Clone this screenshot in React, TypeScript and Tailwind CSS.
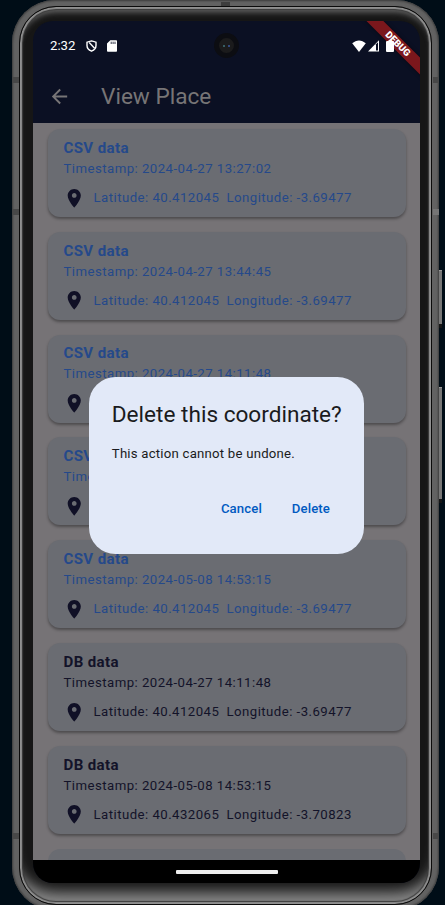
import React from "react";

type Place = {
  title: string;
  timestamp: string;
  latitude: string;
  longitude: string;
  csv: boolean;
};

const places: Place[] = [
  { title: "CSV data", timestamp: "2024-04-27 13:27:02", latitude: "40.412045", longitude: "-3.69477", csv: true },
  { title: "CSV data", timestamp: "2024-04-27 13:44:45", latitude: "40.412045", longitude: "-3.69477", csv: true },
  { title: "CSV data", timestamp: "2024-04-27 14:11:48", latitude: "40.412045", longitude: "-3.69477", csv: true },
  { title: "CSV data", timestamp: "2024-04-27 14:53:15", latitude: "40.412045", longitude: "-3.69477", csv: true },
  { title: "CSV data", timestamp: "2024-05-08 14:53:15", latitude: "40.412045", longitude: "-3.69477", csv: true },
  { title: "DB data", timestamp: "2024-04-27 14:11:48", latitude: "40.412045", longitude: "-3.69477", csv: false },
  { title: "DB data", timestamp: "2024-05-08 14:53:15", latitude: "40.432065", longitude: "-3.70823", csv: false },
];

function StatusBar() {
  return (
    <div className="relative z-10 flex h-[49px] items-center pl-[17px] pr-[26px] text-white">
      <span className="w-[36px] pt-px text-[13.200px] leading-none">2:32</span>
      <svg className="h-[12px] w-[11px]" viewBox="0 0 11 12" fill="none" stroke="white" strokeWidth="1.4">
        <path d="M5.500.9 10 2.200v3.400c0 2.500-1.800 4.600-4.500 5.600C2.800 10.200 1 8.100 1 5.600V2.200Z" />
        <path d="M3.200 2.600 8.600 8.300" />
      </svg>
      <svg className="ml-[10px] h-[12px] w-[10px]" viewBox="0 0 10 12">
        <path d="M3.300.2H9.200Q10 .2 10 1V11Q10 11.800 9.200 11.800H.9Q0 11.800 0 11V3.600Z" fill="white" />
        <path d="M4.200 1.700v2.300M6.100 1.700v2.300M8 1.700v2.300" stroke="#20253a" strokeWidth=".9" />
      </svg>
      <svg className="ml-auto h-[12px] w-[14px]" viewBox="0 0 14 12">
        <path d="M7 12 .2 3.300C4.300-.6 9.700-.6 13.800 3.300Z" fill="white" />
      </svg>
      <svg className="ml-[2px] h-[12px] w-[11px]" viewBox="0 0 11 12">
        <path d="M11 .3V11.500H0Z" fill="white" />
        <path d="M8 4.200 10 2.200V10.500H8Z" fill="#0b1023" />
      </svg>
      <svg className="ml-[7px] h-[12px] w-[8px]" viewBox="0 0 8 12">
        <path d="M2.500 0h3v1H7Q8 1 8 2v9q0 1-1 1H1q-1 0-1-1V2Q0 1 1 1H2.500Z" fill="white" />
      </svg>
    </div>
  );
}

function AppBar() {
  return (
    <header className="flex h-[53px] items-center pl-[15px] text-[#777576]">
      <svg className="h-[23px] w-[23px]" viewBox="0 0 24 24" fill="currentColor">
        <path d="M20 11H7.830l5.590-5.590L12 4l-8 8 8 8 1.410-1.410L7.830 13H20v-2z" />
      </svg>
      <h1 className="ml-[30px] pt-[2px] text-[22.600px] leading-none whitespace-nowrap">View Place</h1>
    </header>
  );
}

function PlaceCard({ place }: { place: Place }) {
  return (
    <li
      className={`flex h-[88px] shrink-0 flex-col rounded-[12px] bg-[#6a6c72] pt-[9.900px] pl-[16px] shadow-[0_2px_3px_rgba(0,0,0,0.35)] ${
        place.csv ? "text-[#25498a]" : "text-[#131329]"
      }`}
    >
      <h2 className="text-[15.060px] leading-[18px] font-bold tracking-[0.38px]">{place.title}</h2>
      <p className="mt-[3px] text-[13.200px] leading-[18px] tracking-[0.46px] whitespace-nowrap">
        Timestamp: {place.timestamp}
      </p>
      <div className="mt-[9px] flex h-[22px] items-center text-[13.200px] tracking-[0.46px] whitespace-nowrap">
        <svg className="-ml-[0.500px] h-[22.500px] w-[22.500px]" viewBox="0 0 24 24" fill="#101026">
          <path d="M12 2C8.130 2 5 5.130 5 9c0 5.250 7 13 7 13s7-7.750 7-13c0-3.870-3.130-7-7-7zm0 9.500c-1.380 0-2.500-1.120-2.500-2.500s1.120-2.500 2.500-2.500 2.500 1.120 2.500 2.500-1.120 2.500-2.500 2.500z" />
        </svg>
        <span className="ml-[8px] w-[133px]">Latitude: {place.latitude}</span>
        <span>Longitude: {place.longitude}</span>
      </div>
    </li>
  );
}

function DeleteDialog() {
  return (
    <div
      role="dialog"
      className="absolute top-[355.500px] left-[56px] z-20 flex h-[177.500px] w-[275px] flex-col rounded-[26.500px] bg-[#e2e9f8] pl-[22.800px] text-[#1a1b20]"
    >
      <h2 className="mt-[23px] text-[22.600px] leading-[30px] whitespace-nowrap">Delete this coordinate?</h2>
      <p className="mt-[14.500px] text-[13.200px] leading-[19px] tracking-[0.22px] whitespace-nowrap">This action cannot be undone.</p>
      <div className="mt-[35.500px] flex justify-end gap-[30px] pr-[34px] text-[13.200px] leading-[19px] font-medium tracking-[0.1px] text-[#005ac1]">
        <button>Cancel</button>
        <button>Delete</button>
      </div>
    </div>
  );
}

export default function App() {
  return (
    <div className="relative flex h-[905px] w-[445px] overflow-hidden bg-[#000d17] font-[Roboto,sans-serif]">
      <div className="absolute top-[270px] left-[438px] h-[58px] w-[4px] border-t border-b-4 border-t-[#999] border-b-[#151515] bg-[#777]" />
      <div className="absolute top-[387px] left-[438px] h-[116px] w-[4px] border-t border-b-4 border-t-[#999] border-b-[#151515] bg-[#777]" />
      {/* metal rim */}
      <div className="relative ml-[12px] h-[910px] w-[427px] shrink-0 rounded-[43px] bg-[#626262] p-[7px] pt-[6px] shadow-[inset_0_0_2px_1px_#3c3c3c]">
        <div className="absolute top-[77px] left-[1px] h-[6px] w-[6px] bg-[#484848]" />
        <div className="absolute top-[77px] right-0 h-[6px] w-[6px] bg-[#484848]" />
        <div className="absolute top-[209px] left-[1px] h-[6px] w-[6px] bg-[#484848]" />
        <div className="absolute top-[209px] right-0 h-[6px] w-[6px] bg-[#757575]" />
        <div className="absolute top-[833px] left-[1px] h-[6px] w-[6px] bg-[#484848]" />
        <div className="absolute top-[833px] right-0 h-[6px] w-[6px] bg-[#484848]" />
        <div className="absolute top-[2px] left-[209px] h-[4px] w-[9px] bg-[#3e3e3e]" />
        {/* glass edge and bezel */}
        <div className="h-[899px] w-[413px] rounded-[37px] border border-[#0b0b0b] bg-[#161616] pt-[14px] pl-[13px] shadow-[inset_0_0_1px_2px_#909090,inset_0_0_1px_3px_#333,inset_0_8px_6px_-3px_#6c6c6c,inset_0_-20px_14px_-8px_#888]">
          <div className="relative flex h-[862px] w-[387px] flex-col overflow-hidden rounded-[20px] bg-[#0b1023]">
            <StatusBar />
            <AppBar />
            <ul className="flex h-[737px] flex-col gap-[14.800px] overflow-hidden bg-[#767376] px-[14.500px] pt-[6px]">
              {places.map((place, index) => (
                <PlaceCard key={index} place={place} />
              ))}
              <li className="h-[88px] shrink-0 rounded-[12px] bg-[#6a6c72]" />
            </ul>
            <div className="flex h-[23px] items-center justify-center bg-black">
              <div className="h-[4px] w-[102px] rounded-[1px] bg-[#eee]" />
            </div>
            <div className="absolute top-[12px] left-[181px] z-10 flex h-[25px] w-[25px] items-center justify-center gap-[3px] rounded-full border-[5px] border-[#0c0d12] bg-[#1b1b1c]">
              <span className="h-[2px] w-[2px] rounded-full bg-[#42747a]" />
              <span className="h-[2px] w-[2px] rounded-full bg-[#3b5aa0]" />
            </div>
            <div className="absolute top-[17px] left-[322.700px] flex h-[11.500px] w-[84px] rotate-45 items-center justify-center bg-[#7b171c] text-[9.600px] leading-none font-black text-white shadow-[0_0_4px_rgba(0,0,0,0.5)]">
              DEBUG
            </div>
            <DeleteDialog />
          </div>
        </div>
      </div>
    </div>
  );
}
